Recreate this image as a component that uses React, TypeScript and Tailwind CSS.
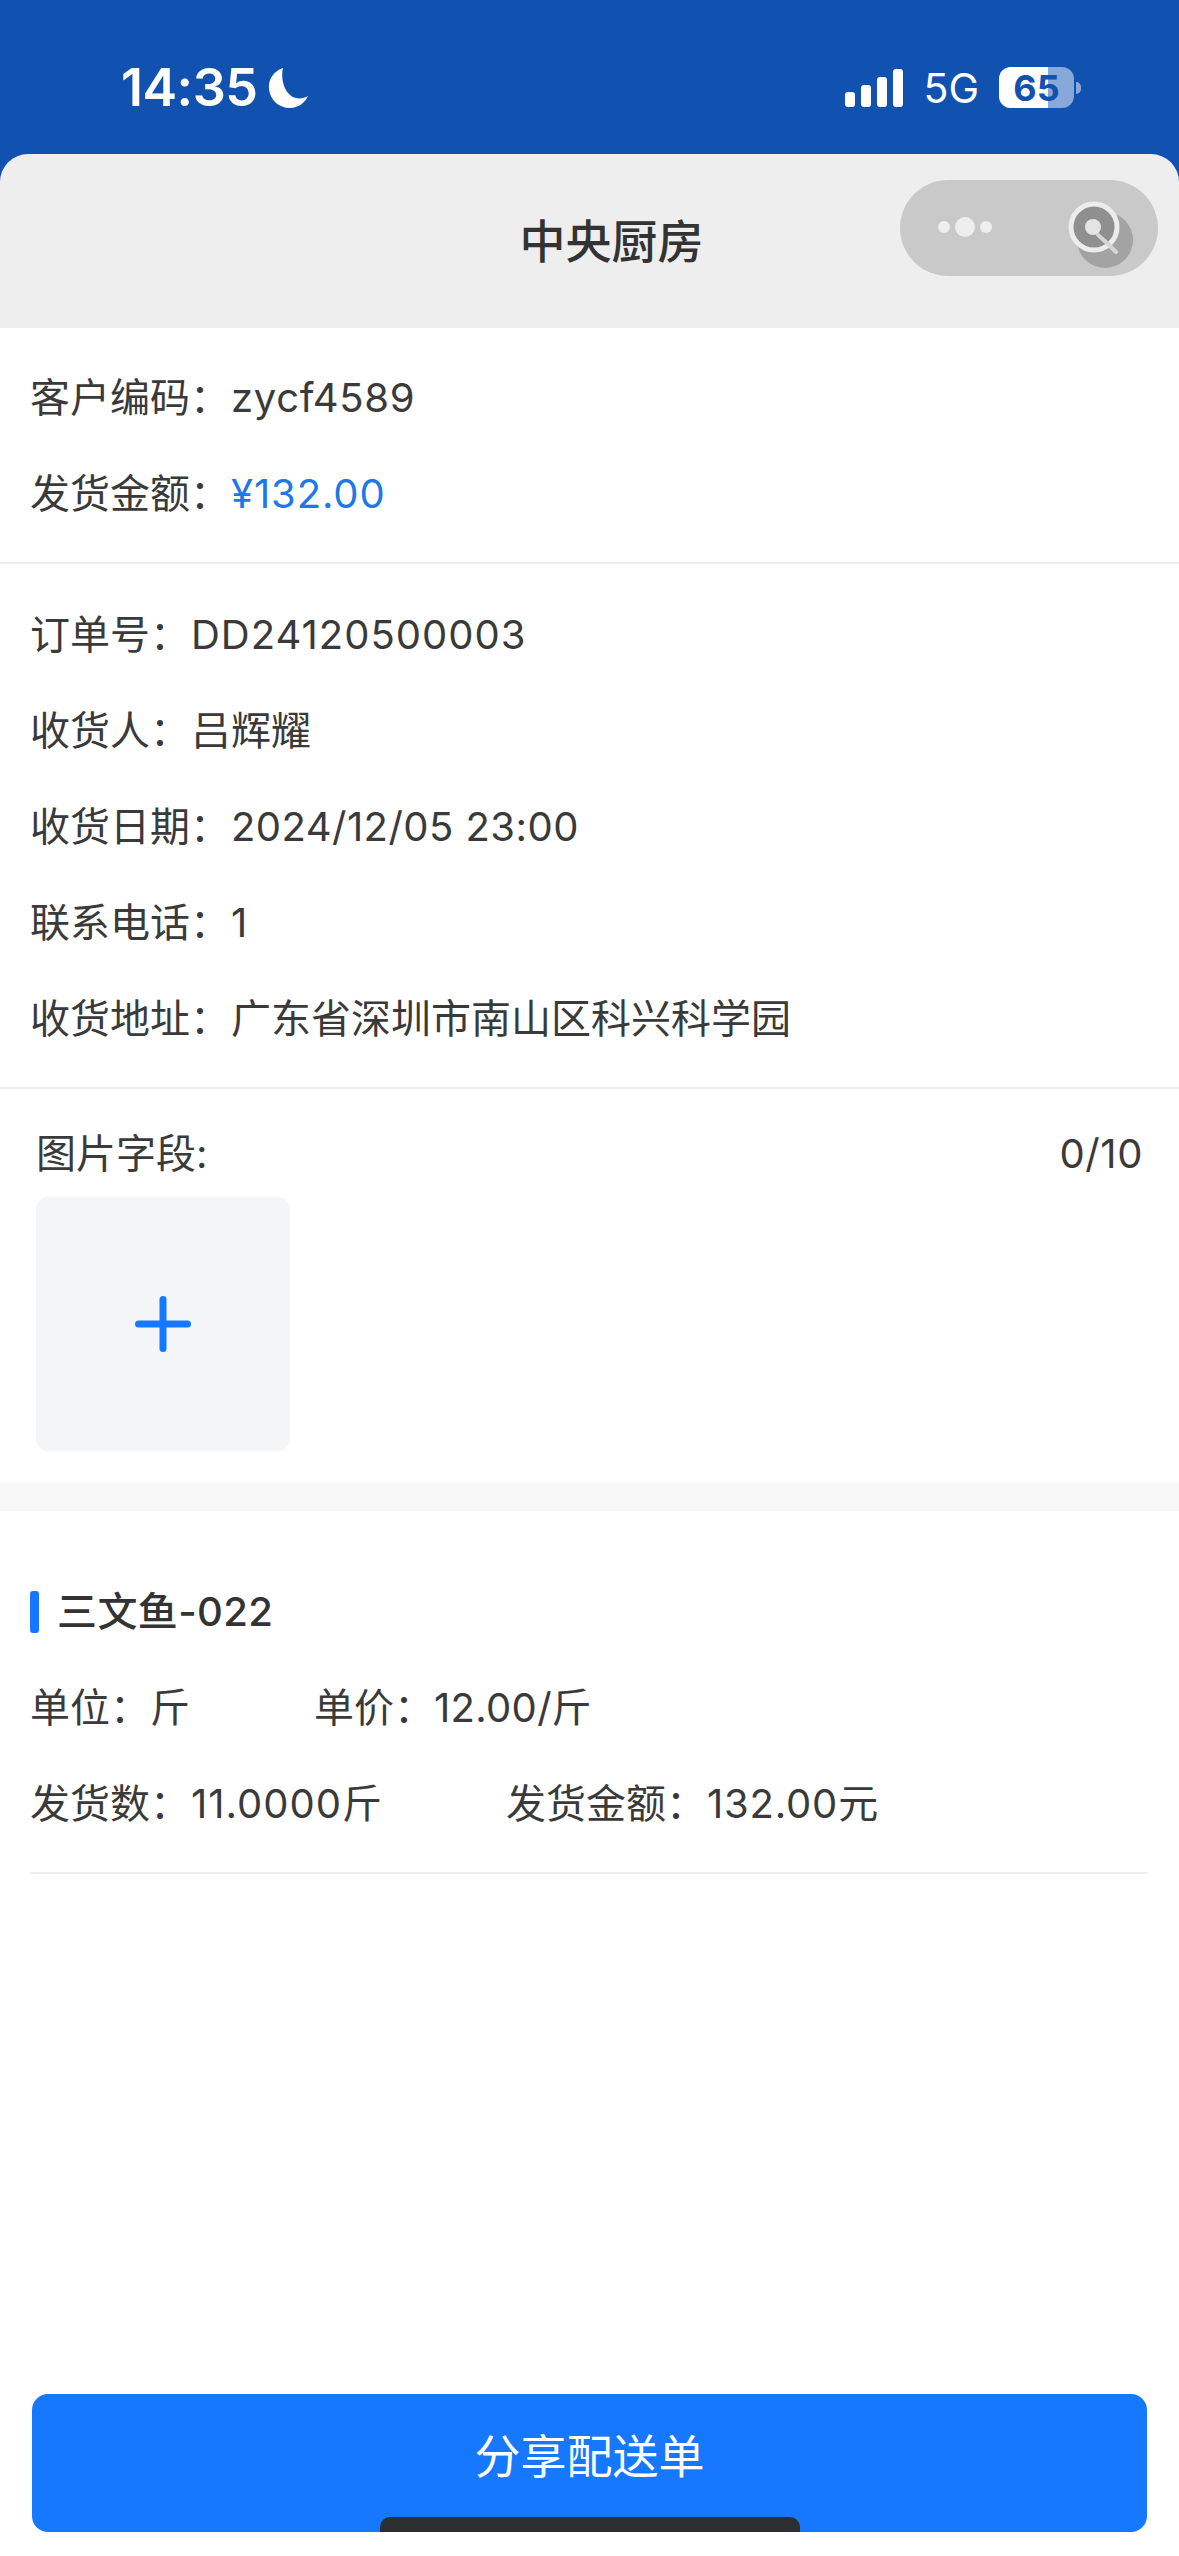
import React from "react";
import { Plus } from "lucide-react";

const fontStack = "[font-family:Inter,'Noto_Sans_CJK_SC',sans-serif]";

function InfoRow({ label, value, valueClass = "" }: { label: string; value: string; valueClass?: string }) {
  return (
    <div className="h-[96px] flex items-center text-[40px] text-[#3a3a3a] whitespace-nowrap">
      <span>{label}</span>
      <span className={`ml-[1px] ${valueClass}`}>{value}</span>
    </div>
  );
}

function StatusBar() {
  return (
    <div className="h-[154px] bg-[#1152b0] flex items-start justify-between pt-[65px] pl-[121px] pr-[98px] text-white">
      <div className="flex items-center gap-[10px]">
        <span className="text-[52px] leading-[46px] font-semibold tracking-[-0.5px]">14:35</span>
        <svg width="40" height="42" viewBox="0 0 40 42">
          <path d="M15 1C6 4 0 12 1 22c1 11 10 19 21 19 8 0 15-5 18-12-3 2-8 3-12 2C18 29 12 14 15 1Z" fill="#fff" />
        </svg>
      </div>
      <div className="flex items-center gap-[20px] mt-[2px]">
        <div className="flex items-end gap-[6px] h-[38px]">
          <div className="w-[10px] h-[15px] rounded-[3px] bg-white" />
          <div className="w-[10px] h-[22px] rounded-[3px] bg-white" />
          <div className="w-[10px] h-[30px] rounded-[3px] bg-white" />
          <div className="w-[10px] h-[38px] rounded-[3px] bg-white" />
        </div>
        <span className="text-[41px] leading-[40px] font-normal">5G</span>
        <div className="flex items-center gap-[2px]">
          <div className="relative w-[75px] h-[41px] rounded-[12px] bg-[#87a8d8] overflow-hidden">
            <div className="w-[49px] h-full bg-white" />
            <span className="absolute inset-0 flex items-center justify-center text-[36px] font-bold text-[#1152b0]">65</span>
          </div>
          <div className="w-[5px] h-[12px] rounded-r-full bg-[#87a8d8]" />
        </div>
      </div>
    </div>
  );
}

function NavBar() {
  return (
    <div className="bg-[#1152b0]">
      <div className="h-[174px] bg-[#eeeeee] rounded-t-[28px] relative flex items-center justify-center pl-[44px]">
        <span className="text-[46px] font-medium text-[#333333]">中央厨房</span>
        <div className="absolute right-[21px] top-[26px] w-[258px] h-[96px] rounded-full bg-[#c9c9c9]">
          <div className="absolute left-[38px] top-[37px] flex items-center gap-[5px]">
            <div className="w-[12px] h-[12px] rounded-full bg-[#eeeeee]" />
            <div className="w-[20px] h-[20px] rounded-full bg-[#eeeeee]" />
            <div className="w-[12px] h-[12px] rounded-full bg-[#eeeeee]" />
          </div>
          <svg className="absolute left-[166px] top-[21px]" width="70" height="70" viewBox="0 0 70 70">
            <circle cx="39" cy="39" r="28" fill="#a3a3a3" />
            <circle cx="28" cy="26" r="23" fill="#8f8f8f" stroke="#ececec" strokeWidth="5" />
            <circle cx="27" cy="26" r="8" fill="#e4e4e4" />
            <path d="M32 34l9 8 9 9" fill="none" stroke="#d6d6d6" strokeWidth="4" strokeLinecap="round" />
          </svg>
        </div>
      </div>
    </div>
  );
}

export default function App() {
  return (
    <div className={`${fontStack} relative w-[1179px] h-[2556px] bg-white flex flex-col overflow-hidden`}>
      <StatusBar />
      <NavBar />

      {/* customer */}
      <div className="h-[236px] pl-[30px] pr-[31px] pt-[22px] border-b-2 border-[#eeeeee]">
        <InfoRow label="客户编码：" value="zycf4589" valueClass="tracking-[0.7px]" />
        <InfoRow label="发货金额：" value="¥132.00" valueClass="text-[#1e78e8] tracking-[0.9px]" />
      </div>

      {/* order */}
      <div className="h-[525px] pl-[30px] pr-[31px] pt-[23px] border-b-2 border-[#eeeeee]">
        <InfoRow label="订单号：" value="DD24120500003" valueClass="tracking-[1px]" />
        <InfoRow label="收货人：" value="吕辉耀" />
        <InfoRow label="收货日期：" value="2024/12/05 23:00" valueClass="tracking-[0.45px]" />
        <InfoRow label="联系电话：" value="1" />
        <InfoRow label="收货地址：" value="广东省深圳市南山区科兴科学园" />
      </div>

      {/* images */}
      <div className="h-[422px] px-[36px] pt-[33px] border-b-[29px] border-[#f8f8f8]">
        <div className="flex items-center justify-between text-[40px] text-[#3a3a3a] h-[64px]">
          <span>图片字段:</span>
          <span className="tracking-[0.6px]">0/10</span>
        </div>
        <div className="mt-[11px] w-[254px] h-[254px] rounded-[12px] bg-[#f4f5f7] flex items-center justify-center">
          <Plus className="w-[84px] h-[84px] text-[#1677ff]" strokeWidth={2} />
        </div>
      </div>

      {/* goods */}
      <div className="pl-[30px] pr-[31px] pt-[53px]">
        <div className="h-[96px] flex items-center gap-[18px]">
          <div className="w-[9px] h-[42px] rounded-[3px] bg-[#1677ff]" />
          <span className="text-[40px] font-medium text-[#333333] tracking-[0.4px]">三文鱼-022</span>
        </div>
        <div className="h-[96px] flex items-center gap-[124px] text-[40px] text-[#3a3a3a] whitespace-nowrap">
          <span>单位：斤</span>
          <span>
            单价：<span className="tracking-[0.3px]">12.00</span>/斤
          </span>
        </div>
        <div className="h-[96px] flex items-center gap-[124px] text-[40px] text-[#3a3a3a] whitespace-nowrap">
          <span>
            发货数：<span className="ml-[1px] tracking-[1px]">11.0000</span>斤
          </span>
          <span>
            发货金额：<span className="ml-[1px] tracking-[0.8px]">132.00</span>元
          </span>
        </div>
        <div className="mt-[20px] h-[2px] bg-[#eeeeee]" />
      </div>

      <div className="mt-auto mb-[24px] mx-[32px] h-[138px] rounded-[16px] bg-[#1677ff] flex items-center justify-center pb-[13px] text-[46px] text-white">
        分享配送单
      </div>

      {/* home indicator */}
      <div className="absolute left-[380px] bottom-[24px] w-[420px] h-[15px] rounded-t-[10px] bg-[#2d3033]" />
    </div>
  );
}
